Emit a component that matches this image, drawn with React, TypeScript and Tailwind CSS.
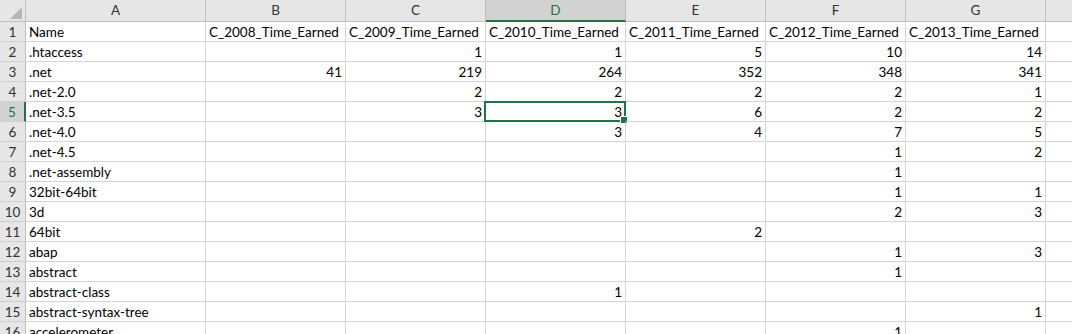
import React from "react"

type Row = [string, ...(number | null)[]]

const columns = ["A", "B", "C", "D", "E", "F", "G", "H"]

const rows: Row[] = [
  [".htaccess", null, 1, 1, 5, 10, 14],
  [".net", 41, 219, 264, 352, 348, 341],
  [".net-2.0", null, 2, 2, 2, 2, 1],
  [".net-3.5", null, 3, 3, 6, 2, 2],
  [".net-4.0", null, null, 3, 4, 7, 5],
  [".net-4.5", null, null, null, null, 1, 2],
  [".net-assembly", null, null, null, null, 1, null],
  ["32bit-64bit", null, null, null, null, 1, 1],
  ["3d", null, null, null, null, 2, 3],
  ["64bit", null, null, null, 2, null, null],
  ["abap", null, null, null, null, 1, 3],
  ["abstract", null, null, null, null, 1, null],
  ["abstract-class", null, null, 1, null, null, null],
  ["abstract-syntax-tree", null, null, null, null, null, 1],
  ["accelerometer", null, null, null, null, 1, null],
]

const headers = [
  "Name",
  "C_2008_Time_Earned",
  "C_2009_Time_Earned",
  "C_2010_Time_Earned",
  "C_2011_Time_Earned",
  "C_2012_Time_Earned",
  "C_2013_Time_Earned",
]

// column A is wider, the rest are default excel width
const colWidth = ["w-[180px]", "w-[140px]", "w-[140px]", "w-[140px]", "w-[140px]", "w-[140px]", "w-[140px]", "w-[140px]"]

function ColumnHeader() {
  return (
    <div className="flex h-[22px]">
      <div className="relative w-[26px] shrink-0 bg-[#e6e6e6] border-r border-b border-[#bfbfbf]">
        <svg className="absolute left-[9px] top-[6px]" width="14" height="14" viewBox="0 0 14 14">
          <polygon points="13,1 13,13 1,13" fill="#b6b6b6" />
        </svg>
      </div>
      {columns.map((c, i) => {
        const selected = c === "D"
        return (
          <div
            key={c}
            className={`${colWidth[i]} shrink-0 flex items-center justify-center border-r ${
              selected
                ? "bg-[#d2d2d2] text-[#217346] border-b-2 border-b-[#217346] border-r-[#bfbfbf]"
                : "bg-[#e6e6e6] text-[#333] border-b border-[#bfbfbf]"
            }`}
          >
            {c}
          </div>
        )
      })}
    </div>
  )
}

function RowHeader({ n }: { n: number }) {
  const selected = n === 5
  return (
    <div
      className={`w-[26px] shrink-0 h-[20px] flex justify-center pt-[2px] leading-[17px] border-b border-b-[#cfcfcf] ${
        selected
          ? "bg-[#d2d2d2] text-[#217346] border-r-2 border-r-[#217346]"
          : "bg-[#e6e6e6] text-[#333] border-r border-r-[#bfbfbf]"
      }`}
    >
      {n}
    </div>
  )
}

function Cell({
  value,
  width,
  right,
  active,
}: {
  value: string | number | null
  width: string
  right?: boolean
  active?: boolean
}) {
  return (
    <div
      className={`${width} shrink-0 h-[20px] relative border-r border-b border-[#d4d4d4] pt-[2px] leading-[17px] whitespace-nowrap ${
        right ? "text-right pr-[3px]" : "pl-[3px]"
      }`}
    >
      {value ?? ""}
      {active && (
        <>
          <div className="absolute -left-[2px] -top-[1px] -right-[1px] -bottom-[1px] border-2 border-[#217346] pointer-events-none" />
          <div className="absolute -right-[3px] -bottom-[3px] w-[6px] h-[6px] bg-[#217346] border border-white box-content" />
        </>
      )}
    </div>
  )
}

export default function App() {
  return (
    <div
      className="w-[1072px] h-[334px] overflow-hidden bg-white text-black text-[13.5px]"
      style={{ fontFamily: "Lato, 'Liberation Sans', sans-serif" }}
    >
      <ColumnHeader />
      <div className="flex">
        <RowHeader n={1} />
        {headers.map((h, i) => (
          <Cell key={h} value={h} width={colWidth[i]} />
        ))}
        <Cell value={null} width={colWidth[7]} />
      </div>
      {rows.map((r, ri) => (
        <div key={ri} className="flex">
          <RowHeader n={ri + 2} />
          {r.map((v, ci) => (
            <Cell
              key={ci}
              value={v}
              width={colWidth[ci]}
              right={ci > 0}
              active={ri + 2 === 5 && ci === 3}
            />
          ))}
          <Cell value={null} width={colWidth[7]} />
        </div>
      ))}
    </div>
  )
}
